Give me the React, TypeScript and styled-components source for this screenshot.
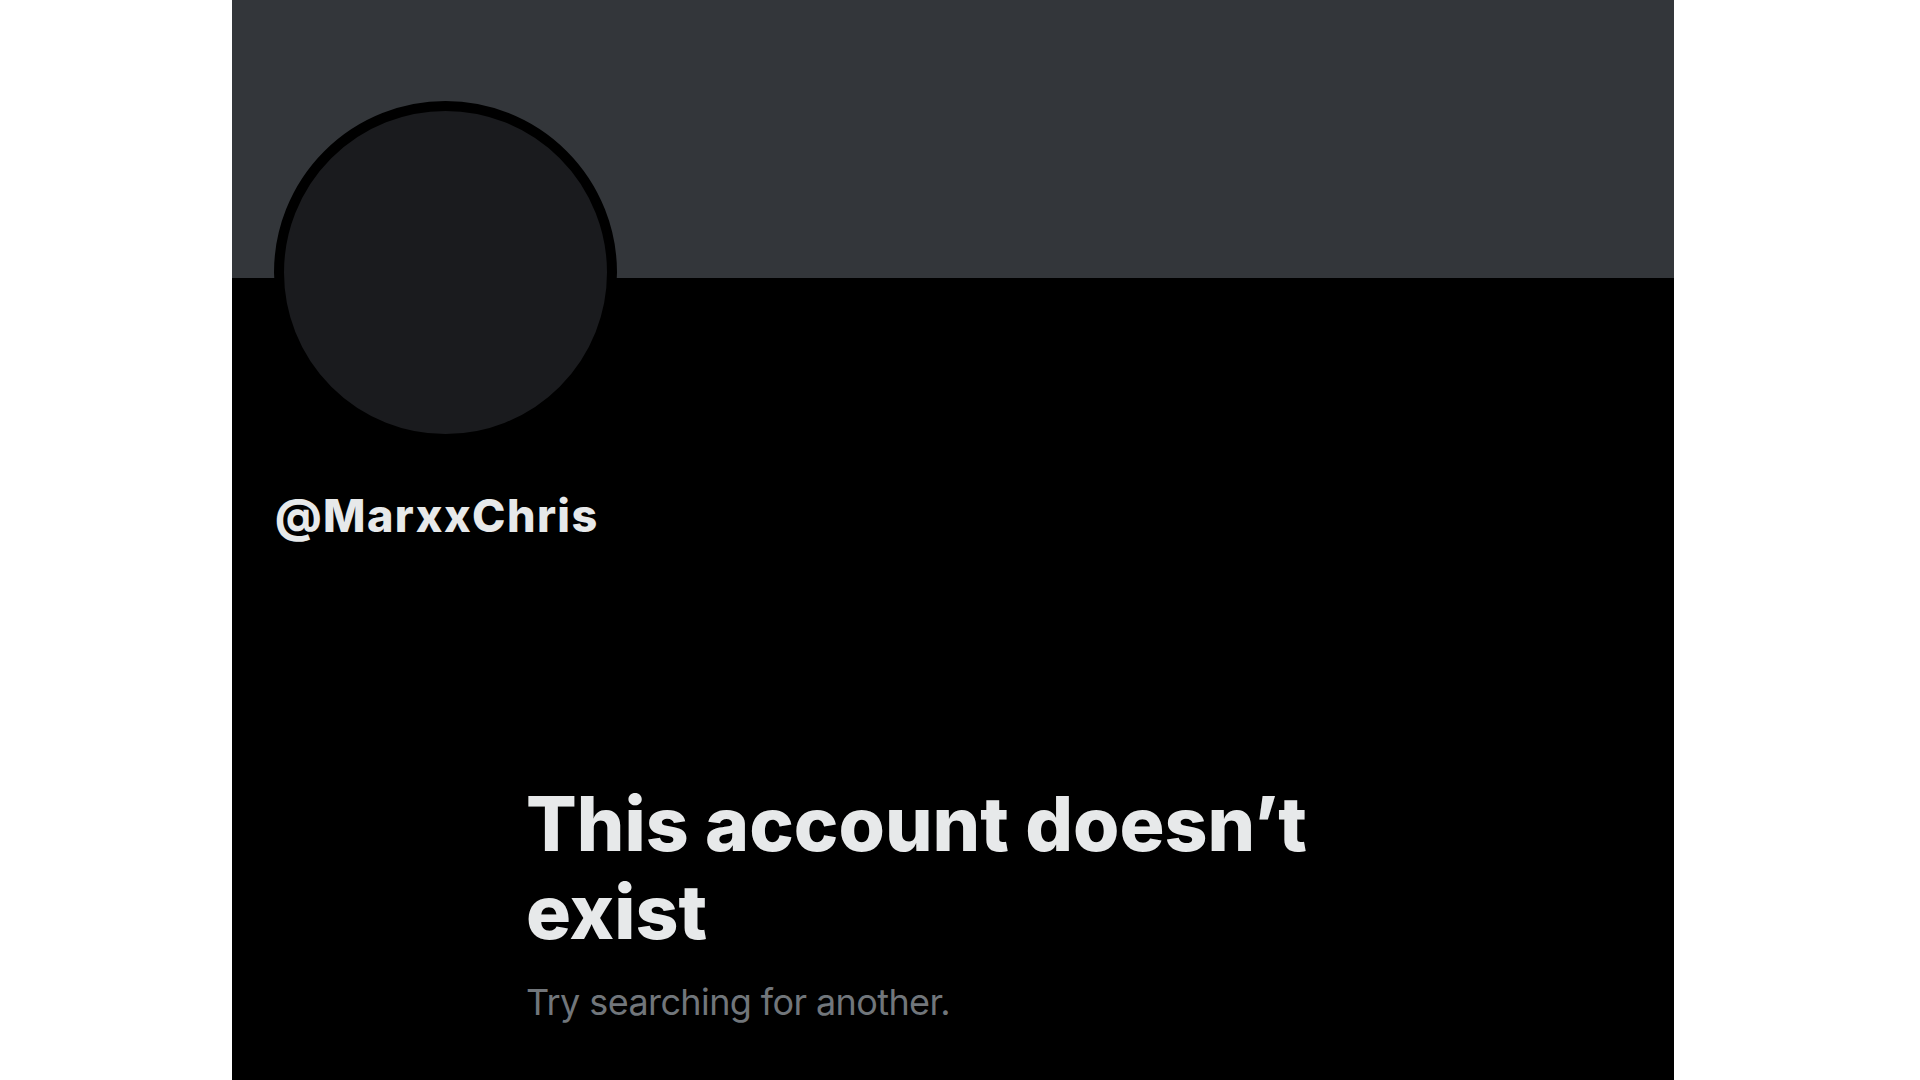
import React from 'react';
import styled, { createGlobalStyle } from 'styled-components';

const GlobalStyle = createGlobalStyle`
  html, body {
    margin: 0;
    padding: 0;
    background: #ffffff;
    height: 100%;
    overflow: hidden;
  }
`;

const Page = styled.div`
  width: 1920px;
  height: 1080px;
  display: flex;
  padding-left: 232px;
  box-sizing: border-box;
  font-family: Inter, 'Liberation Sans', sans-serif;
`;

const Panel = styled.main`
  width: 1442px;
  height: 100%;
  background: #000000;
  display: flex;
  flex-direction: column;
`;

const Banner = styled.div`
  height: 278px;
  background: #33363a;
  flex-shrink: 0;
`;

const ProfileHead = styled.div`
  padding: 0 42px;
`;

const Avatar = styled.div`
  width: 343px;
  height: 343px;
  margin-top: -177px;
  border-radius: 50%;
  border: 10px solid #000000;
  box-sizing: border-box;
  background: #1a1b1e;
`;

const Handle = styled.div`
  margin-top: 42px;
  padding-left: 1px;
  font-size: 45px;
  font-weight: 800;
  line-height: 60px;
  letter-spacing: 1.4px;
  color: #e7e9ea;
`;

const EmptyState = styled.section`
  padding: 234px 0 0 294px;
  width: 860px;
`;

const Heading = styled.h1`
  margin: 0;
  font-size: 75px;
  font-weight: 800;
  line-height: 88px;
  letter-spacing: 0px;
  color: #e7e9ea;
`;

const Hint = styled.p`
  margin: 22px 0 0;
  font-size: 36px;
  font-weight: 400;
  line-height: 48px;
  letter-spacing: -0.6px;
  color: #71767b;
`;

export default function App() {
  return (
    <>
      <GlobalStyle />
      <Page>
        <Panel>
          <Banner />
          <ProfileHead>
            <Avatar />
            <Handle>@MarxxChris</Handle>
          </ProfileHead>
          <EmptyState>
            <Heading>This account doesn’t exist</Heading>
            <Hint>Try searching for another.</Hint>
          </EmptyState>
        </Panel>
      </Page>
    </>
  );
}
